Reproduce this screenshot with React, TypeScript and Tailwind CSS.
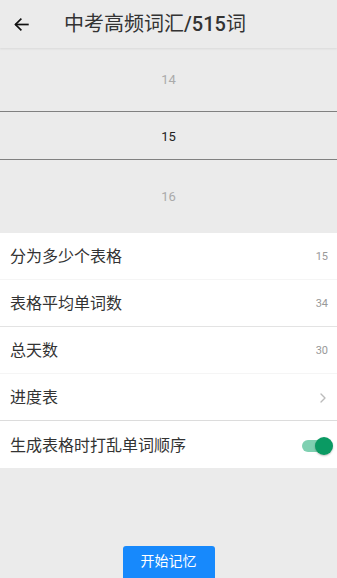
import { ChevronRight } from 'lucide-react';

const ROWS = [
  { label: '分为多少个表格', value: '15', line: 'border-[#f5f5f5]' },
  { label: '表格平均单词数', value: '34', line: 'border-[#e3e3e3]' },
  { label: '总天数', value: '30', line: 'border-[#f5f5f5]' },
];

export default function App() {
  return (
    <div
      className="w-[337px] h-[578px] bg-[#ebebeb] flex flex-col overflow-hidden"
      style={{ fontFamily: 'Roboto, "Noto Sans CJK SC", sans-serif' }}
    >
      {/* Header */}
      <div className="h-[48px] flex items-center bg-[#ebebeb] shadow-[0_1px_2px_rgba(0,0,0,0.08)] relative z-10">
        <div className="w-[64px] flex items-center pl-[13px]">
          <svg width="17" height="17" viewBox="0 0 24 24" fill="none" stroke="#111" strokeWidth="2.4" strokeLinecap="square">
            <path d="M21 12H4" />
            <path d="M11 4.5L3.5 12L11 19.5" />
          </svg>
        </div>
        <h1 className="text-[20px] text-[#333] font-normal">
          中考高频词汇<span className="font-medium">/515</span>词
        </h1>
      </div>

      {/* Picker */}
      <div className="h-[185px] flex flex-col">
        <div className="h-[63px] flex items-center justify-center text-[13px] text-[#aaa]">14</div>
        <div className="h-[49px] flex items-center justify-center text-[13px] text-[#222] border-y border-[#808080] pt-[2px]">15</div>
        <div className="h-[73px] flex items-center justify-center text-[13px] text-[#aaa]">16</div>
      </div>

      {/* Settings list */}
      <div className="bg-white flex flex-col">
        {ROWS.map((r) => (
          <div key={r.label} className={`h-[47px] flex items-center justify-between pl-[10px] pr-[9px] pt-[2px] border-b ${r.line}`}>
            <span className="text-[16px] text-[#333]">{r.label}</span>
            <span className="text-[11px] text-[#999]">{r.value}</span>
          </div>
        ))}
        <div className="h-[47px] flex items-center justify-between pl-[10px] pr-[6px] pt-[2px] border-b border-[#dcdcdc]">
          <span className="text-[16px] text-[#333]">进度表</span>
          <ChevronRight className="w-[16px] h-[16px] text-[#bbb]" strokeWidth={2} />
        </div>
        <div className="h-[47px] flex items-center justify-between pl-[10px] pr-[4px] pt-[2px]">
          <span className="text-[16px] text-[#333]">生成表格时打乱单词顺序</span>
          <div className="relative w-[32px] h-[20px] flex items-center">
            <div className="w-[26px] h-[12px] rounded-full bg-[#7fd0b1] ml-[1px]" />
            <div className="absolute right-0 top-[1px] w-[18px] h-[18px] rounded-full bg-[#0a9a63] shadow-[0_1px_2px_rgba(0,0,0,0.25)]" />
          </div>
        </div>
      </div>

      {/* Start button */}
      <div className="flex-1 flex items-end justify-center">
        <button className="w-[92px] h-[33px] -mb-[1px] rounded-t-[3px] bg-[#1789fc] text-white text-[14px] flex items-center justify-center pb-[2px]">
          开始记忆
        </button>
      </div>
    </div>
  );
}
